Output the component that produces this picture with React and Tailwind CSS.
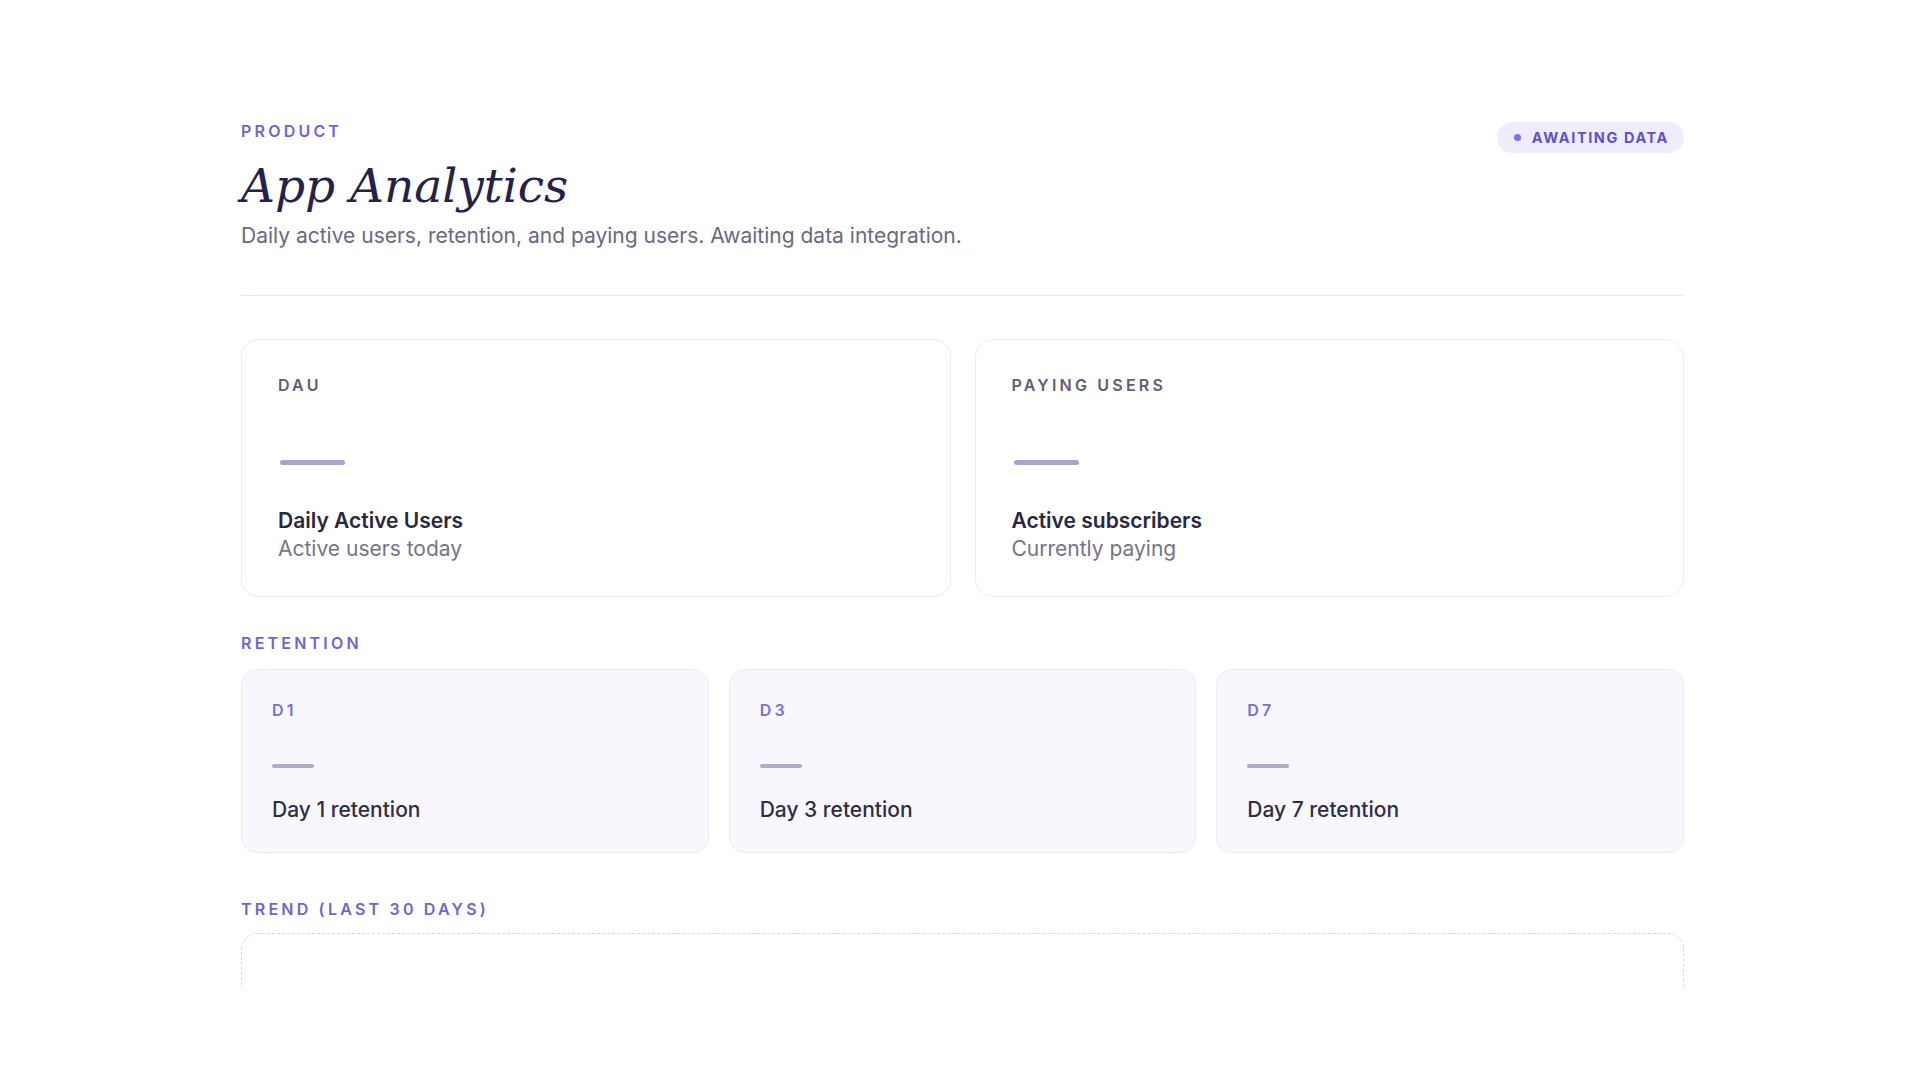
import React from 'react';

const metrics = [
  { key: 'dau', label: 'DAU', title: 'Daily Active Users', sub: 'Active users today' },
  { key: 'paying', label: 'PAYING USERS', title: 'Active subscribers', sub: 'Currently paying' },
];

const retention = [
  { key: 'd1', label: 'D1', title: 'Day 1 retention' },
  { key: 'd3', label: 'D3', title: 'Day 3 retention' },
  { key: 'd7', label: 'D7', title: 'Day 7 retention' },
];

function SectionLabel({ children }) {
  return (
    <div className="text-[16px] leading-5 font-semibold tracking-[0.2em] text-[#7064cf]">
      {children}
    </div>
  );
}

export default function App() {
  return (
    <div className="min-h-screen bg-white font-['Inter','Noto_Sans',sans-serif]">
      <div className="h-[988px] overflow-hidden">
        <div className="ml-[241px] w-[1443px] pt-[121px]">
          {/* header */}
          <div className="flex items-start justify-between">
            <div>
              <SectionLabel>PRODUCT</SectionLabel>
              <h1 className="mt-[18px] font-['DejaVu_Serif',serif] italic text-[47px] leading-[53px] text-[#25224a]">
                App Analytics
              </h1>
              <p className="mt-[10px] text-[21px] leading-7 text-[#6b6880]">
                Daily active users, retention, and paying users. Awaiting data integration.
              </p>
            </div>
            <div className="mt-px flex h-[31px] items-center gap-[11px] rounded-full bg-[#efecfd] pl-[17px] pr-[15px]">
              <span className="h-[7px] w-[7px] rounded-full bg-[#7c6cf0]" />
              <span className="text-[14.5px] font-bold tracking-[0.11em] text-[#5f52c7]">AWAITING DATA</span>
            </div>
          </div>

          <div className="mt-[45px] h-px bg-[#ebe9f1]" />

          {/* top metrics */}
          <div className="mt-[43px] grid grid-cols-2 gap-6">
            {metrics.map((m) => (
              <div key={m.key} className="rounded-[18px] border border-[#ecebf2] bg-white px-9 pt-[35px] pb-[33px]">
                <div className="text-[16px] leading-5 font-semibold tracking-[0.2em] text-[#615d74]">{m.label}</div>
                <div className="mt-[65px] ml-[2px] h-[5px] w-[65px] rounded-full bg-[#aaa4c8]" />
                <div className="mt-[42px] text-[21px] leading-7 font-semibold text-[#2a2740]">{m.title}</div>
                <div className="text-[21px] leading-7 text-[#77738a]">{m.sub}</div>
              </div>
            ))}
          </div>

          {/* retention */}
          <div className="mt-[36px]">
            <SectionLabel>RETENTION</SectionLabel>
          </div>
          <div className="mt-[16px] grid grid-cols-3 gap-5">
            {retention.map((r) => (
              <div key={r.key} className="rounded-[16px] border border-[#ecebf5] bg-[#f8f7fd] px-[30px] pt-[30px] pb-[28px]">
                <div className="text-[16px] leading-5 font-semibold tracking-[0.2em] text-[#7a6fca]">{r.label}</div>
                <div className="mt-[44px] h-[4px] w-[42px] rounded-full bg-[#b0aacb]" />
                <div className="mt-[28px] text-[21px] leading-7 font-medium text-[#302d42]">{r.title}</div>
              </div>
            ))}
          </div>

          {/* trend */}
          <div className="mt-[46px]">
            <SectionLabel>TREND (LAST 30 DAYS)</SectionLabel>
          </div>
          <div className="mt-[14px] h-[320px] rounded-[16px] border border-dashed border-[#d9d5ec]" />
        </div>
      </div>
    </div>
  );
}
